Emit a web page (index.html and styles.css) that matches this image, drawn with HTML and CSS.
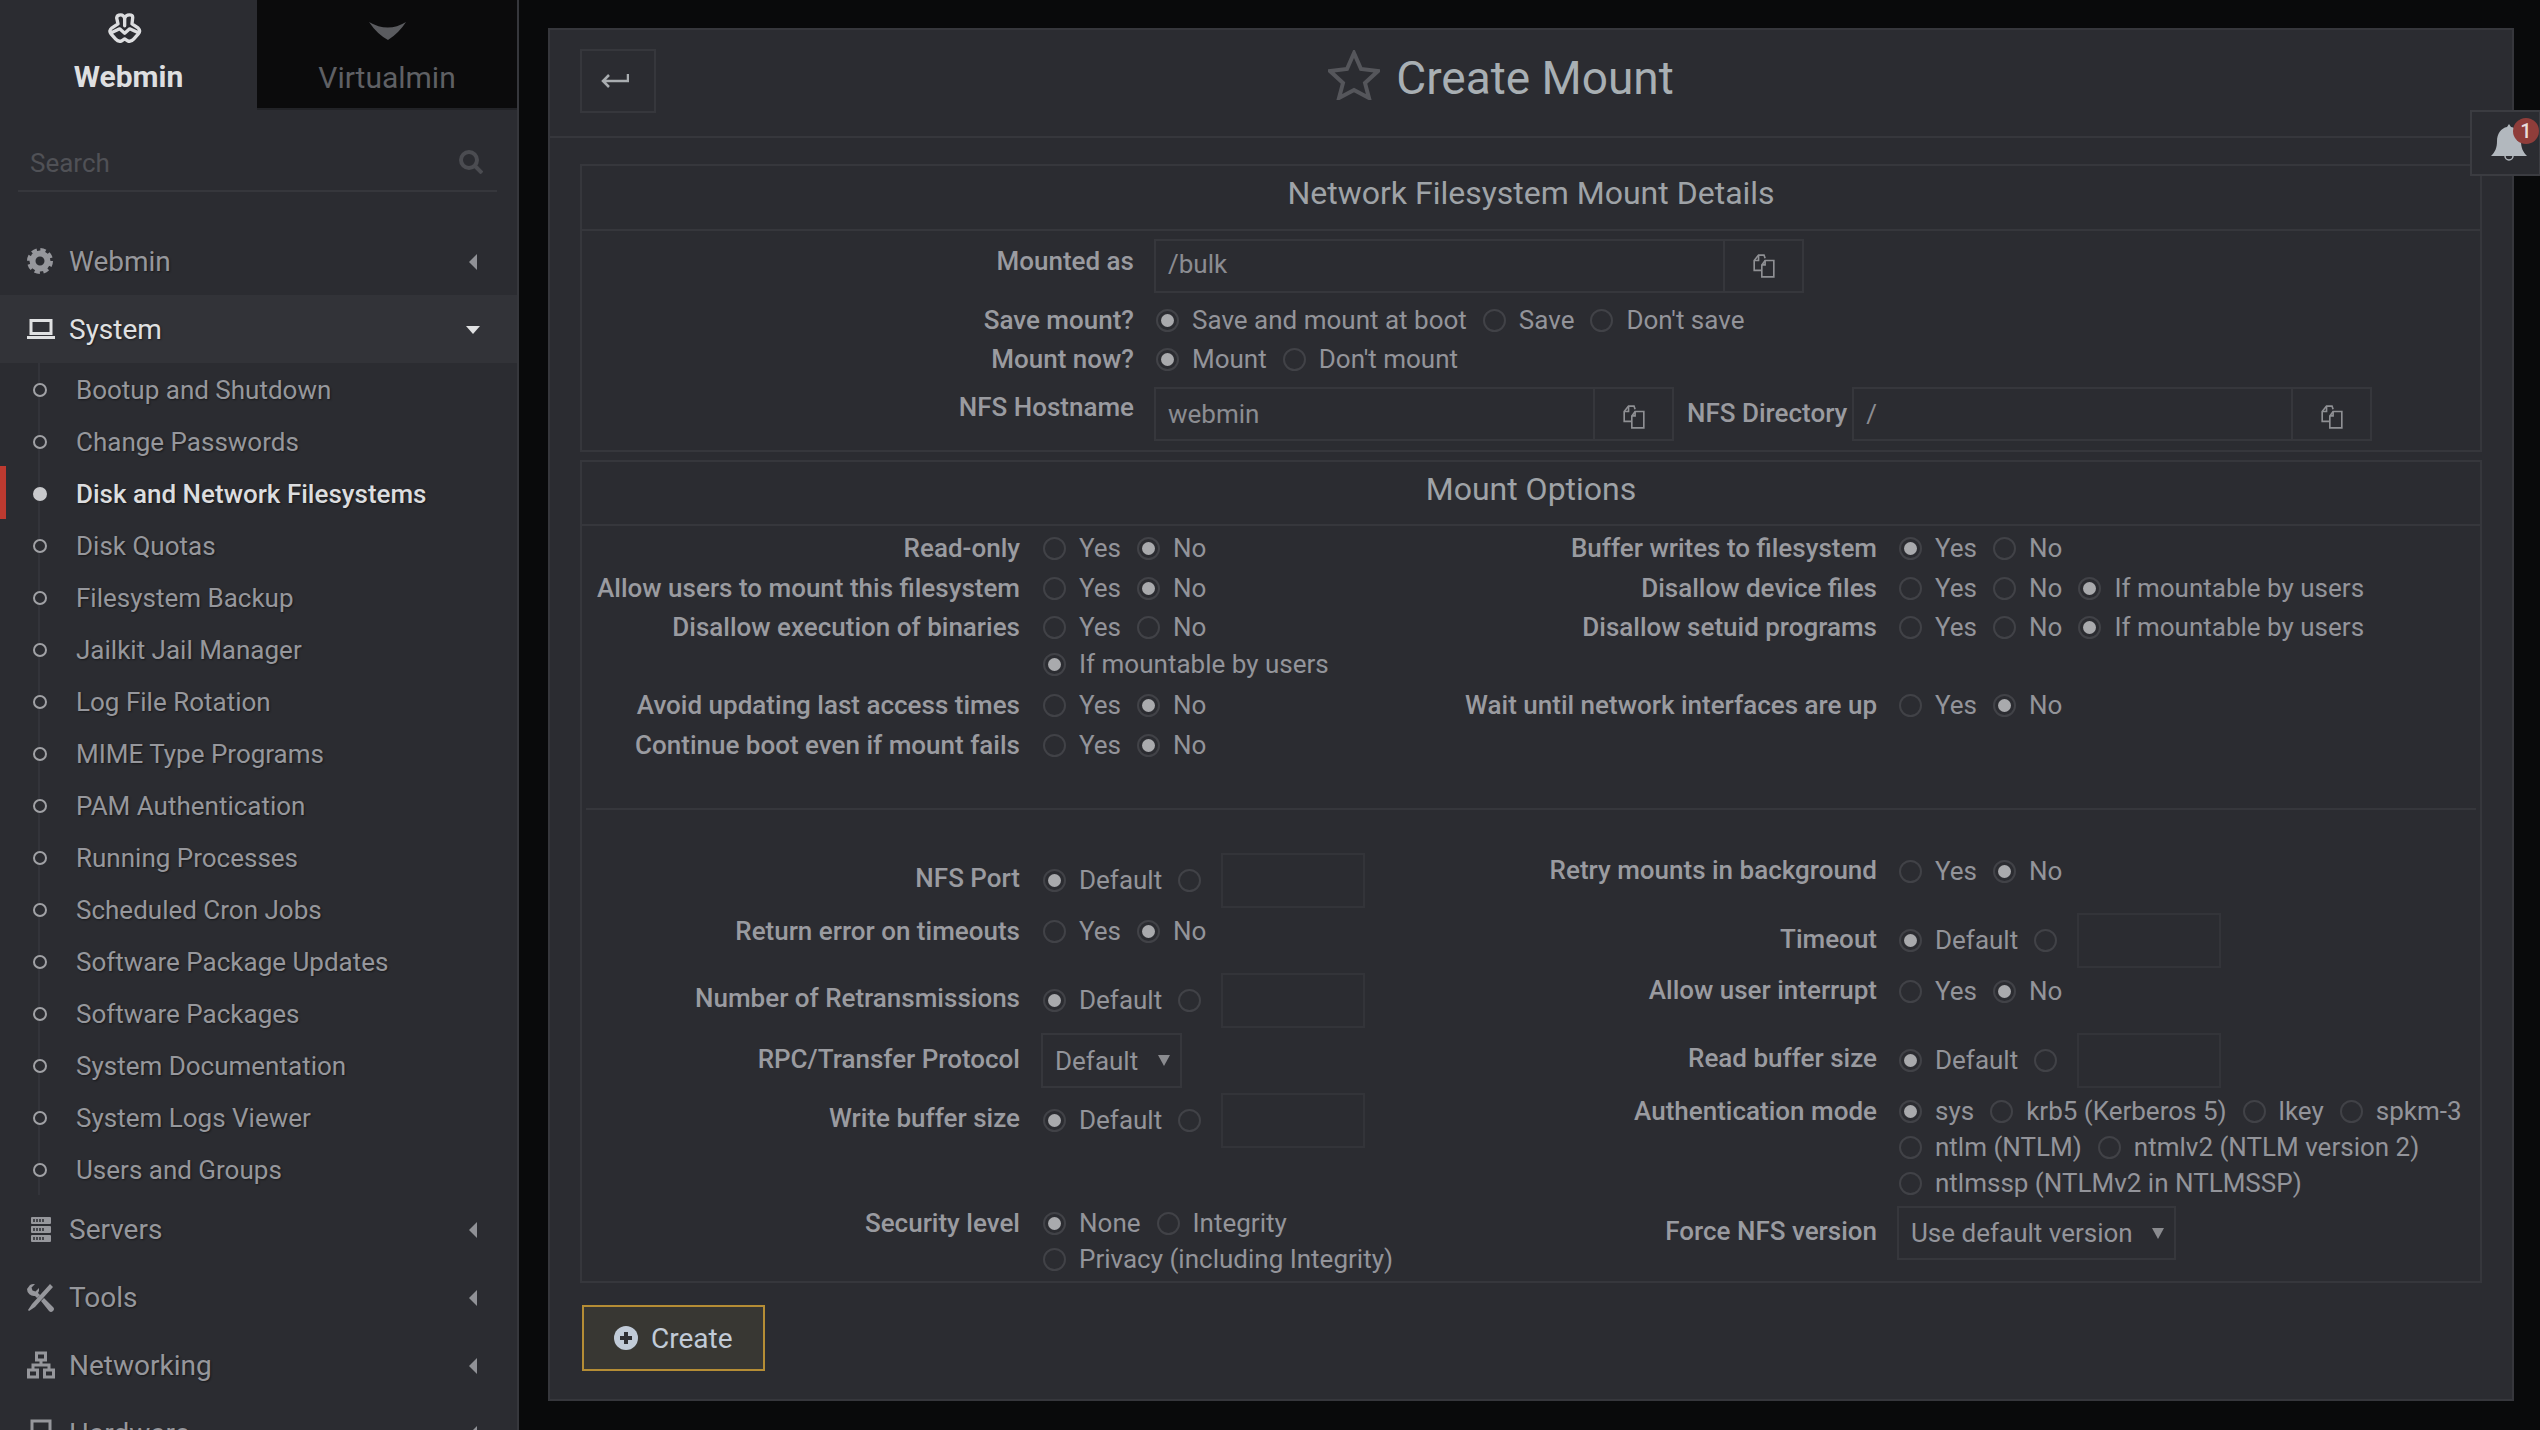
FILE: index.html
```html
<!DOCTYPE html>
<html lang="en">
<head>
<meta charset="utf-8">
<title>Create Mount</title>
<link rel="stylesheet" href="styles.css">
</head>
<body>
<aside class="sidebar">
  <div class="tabs">
    <div class="tab tab-on">
      <svg class="logo" viewBox="0 0 102 92"><path d="M30 32 L26 14 Q27 5 38 5 Q47 5 50 15 Q53 5 64 5 Q75 5 74 14 L72 32 L90 44 Q99 53 91 62 L77 78 Q69 87 59 83 L50 77 L41 83 Q31 87 23 78 L9 62 Q1 53 12 44 Z M50 15 V38 M13 57 L35 47 L50 60 L65 47 L88 57"/></svg>
      <span>Webmin</span>
    </div>
    <div class="tab tab-off">
      <svg class="chev" viewBox="0 0 37 18"><path d="M0 0 Q19 11 37 0 Q30 11 19 18 Q8 12 0 0Z"/></svg>
      <span>Virtualmin</span>
    </div>
  </div>
  <div class="search">
    <span>Search</span>
    <svg class="search-ico" viewBox="0 0 24 24"><circle cx="10" cy="10" r="8"/><path d="M16 16l7 7"/></svg>
  </div>
  <nav class="nav">
    <div class="sec">
      <svg class="ico" viewBox="0 0 28 28"><circle cx="13" cy="14" r="7.5" class="gear-ring"/><circle cx="13" cy="14" r="10.5" class="gear-teeth"/></svg>
      <span class="sec-name">Webmin</span><i class="ar-left"></i>
    </div>
    <div class="sec sec-open">
      <svg class="ico" viewBox="0 0 28 28"><path class="lap" d="M4 5.500h20v13H4z"/><path class="lap" d="M0 22.500h28"/></svg>
      <span class="sec-name">System</span><i class="ar-down"></i>
    </div>
    <ul class="sub">
      <li>Bootup and Shutdown</li>
      <li>Change Passwords</li>
      <li class="on">Disk and Network Filesystems</li>
      <li>Disk Quotas</li>
      <li>Filesystem Backup</li>
      <li>Jailkit Jail Manager</li>
      <li>Log File Rotation</li>
      <li>MIME Type Programs</li>
      <li>PAM Authentication</li>
      <li>Running Processes</li>
      <li>Scheduled Cron Jobs</li>
      <li>Software Package Updates</li>
      <li>Software Packages</li>
      <li>System Documentation</li>
      <li>System Logs Viewer</li>
      <li>Users and Groups</li>
    </ul>
    <div class="sec">
      <svg class="ico" viewBox="0 0 28 28"><path class="fill" d="M5 2h18a1 1 0 0 1 1 1v5a1 1 0 0 1-1 1H5a1 1 0 0 1-1-1V3a1 1 0 0 1 1-1zM5 11h18a1 1 0 0 1 1 1v5a1 1 0 0 1-1 1H5a1 1 0 0 1-1-1v-5a1 1 0 0 1 1-1zM5 20h18a1 1 0 0 1 1 1v5a1 1 0 0 1-1 1H5a1 1 0 0 1-1-1v-5a1 1 0 0 1 1-1z"/><path class="srv" d="M7 4v3M10 4v3M13 4v3M16 4v3M7 13v3M10 13v3M13 13v3M16 13v3M7 22v3M10 22v3M13 22v3M16 22v3"/></svg>
      <span class="sec-name">Servers</span><i class="ar-left"></i>
    </div>
    <div class="sec">
      <svg class="ico" viewBox="0 0 28 28"><path class="fill" d="M23 1l3 3L8 24l-6 4-1-1 4-6zM3 2a7 7 0 0 1 5-1L4.500 4.500l1 3 3 1L12 5a7 7 0 0 1-1 5l2 2-3 3-2-2a7 7 0 0 1-8-7zM17 15l9 9a2.500 2.500 0 0 1-4 4l-8-10z"/></svg>
      <span class="sec-name">Tools</span><i class="ar-left"></i>
    </div>
    <div class="sec">
      <svg class="ico" viewBox="0 0 28 28"><path class="lap" d="M9.500 2h9v7h-9zM1.500 19h9v7h-9zM17.500 19h9v7h-9zM14 9v5M6 19v-5h16v5"/></svg>
      <span class="sec-name">Networking</span><i class="ar-left"></i>
    </div>
    <div class="sec">
      <svg class="ico" viewBox="0 0 28 28"><path class="lap" d="M5 2h18v24H5z"/></svg>
      <span class="sec-name">Hardware</span><i class="ar-left"></i>
    </div>
  </nav>
</aside>

<main class="main">
  <section class="panel">
    <header class="head">
      <button class="back" type="button">
        <svg viewBox="0 0 28 16"><path d="M27 1v7H2M8 2L2 8l6 6"/></svg>
      </button>
      <h1 class="title">
        <svg class="star" viewBox="0 0 52 50"><path d="M26 3l7 16 17 2-13 12 4 15-15-8-15 8 4-15L2 21l17-2z"/></svg>
        <span>Create Mount</span>
      </h1>
    </header>

    <div class="bell">
      <svg viewBox="0 0 36 37"><path d="M18 0l2 3c6 1 10 7 10 14 0 7 2 11 6 15H0c4-4 6-8 6-15C6 10 10 4 16 3z"/><path class="clap" d="M14 32a4 4 0 0 0 8 0"/></svg>
      <b class="badge">1</b>
    </div>

    <form class="forms">
      <section class="box">
        <h2 class="box-title">Network Filesystem Mount Details</h2>
        <div class="box-one">
          <div class="row r-one h54">
            <div class="lab up10">Mounted as</div>
            <div class="val">
              <div class="group g-mount"><span class="field">/bulk</span><span class="copy"><svg class="copy-ico" viewBox="0 0 22 22"><path d="M9 15H2V6l4-5h5l1 3"/><path d="M2 6h4V1"/><path d="M9 21V10l3-4h8v15z"/><path d="M9 10h3V6"/></svg></span></div>
            </div>
          </div>
          <div class="row r-one h54">
            <div class="lab">Save mount?</div>
            <div class="val"><span class="opt"><i class="rd on"></i>Save and mount at boot</span><span class="opt"><i class="rd"></i>Save</span><span class="opt"><i class="rd"></i>Don't save</span></div>
          </div>
          <div class="row r-one h30 pull3">
            <div class="lab">Mount now?</div>
            <div class="val"><span class="opt"><i class="rd on"></i>Mount</span><span class="opt"><i class="rd"></i>Don't mount</span></div>
          </div>
          <div class="row r-one h54 mt13">
            <div class="lab up14">NFS Hostname</div>
            <div class="val">
              <div class="group g-host"><span class="field field-low">webmin</span><span class="copy copy-low"><svg class="copy-ico" viewBox="0 0 22 22"><path d="M9 15H2V6l4-5h5l1 3"/><path d="M2 6h4V1"/><path d="M9 21V10l3-4h8v15z"/><path d="M9 10h3V6"/></svg></span></div>
              <div class="lab lab-inline">NFS Directory</div>
              <div class="group g-dir"><span class="field field-low">/</span><span class="copy copy-low"><svg class="copy-ico" viewBox="0 0 22 22"><path d="M9 15H2V6l4-5h5l1 3"/><path d="M2 6h4V1"/><path d="M9 21V10l3-4h8v15z"/><path d="M9 10h3V6"/></svg></span></div>
            </div>
          </div>
        </div>
      </section>

      <section class="box box-two">
        <h2 class="box-title">Mount Options</h2>
        <div class="cols cols-top">
          <div class="col-l">
            <div class="row r-l h44"><div class="lab">Read-only</div><div class="val"><span class="opt"><i class="rd"></i>Yes</span><span class="opt"><i class="rd on"></i>No</span></div></div>
            <div class="row r-l h36"><div class="lab">Allow users to mount this filesystem</div><div class="val"><span class="opt"><i class="rd"></i>Yes</span><span class="opt"><i class="rd on"></i>No</span></div></div>
            <div class="row r-l h42"><div class="lab">Disallow execution of binaries</div><div class="val"><span class="opt"><i class="rd"></i>Yes</span><span class="opt"><i class="rd"></i>No</span></div></div>
            <div class="row r-l h32"><div class="lab"></div><div class="val"><span class="opt"><i class="rd on"></i>If mountable by users</span></div></div>
            <div class="row r-l h50"><div class="lab">Avoid updating last access times</div><div class="val"><span class="opt"><i class="rd"></i>Yes</span><span class="opt"><i class="rd on"></i>No</span></div></div>
            <div class="row r-l h30"><div class="lab">Continue boot even if mount fails</div><div class="val"><span class="opt"><i class="rd"></i>Yes</span><span class="opt"><i class="rd on"></i>No</span></div></div>
          </div>
          <div class="col-r">
            <div class="row r-r h44"><div class="lab">Buffer writes to filesystem</div><div class="val"><span class="opt"><i class="rd on"></i>Yes</span><span class="opt"><i class="rd"></i>No</span></div></div>
            <div class="row r-r h36"><div class="lab">Disallow device files</div><div class="val"><span class="opt"><i class="rd"></i>Yes</span><span class="opt"><i class="rd"></i>No</span><span class="opt"><i class="rd on"></i>If mountable by users</span></div></div>
            <div class="row r-r h42"><div class="lab">Disallow setuid programs</div><div class="val"><span class="opt"><i class="rd"></i>Yes</span><span class="opt"><i class="rd"></i>No</span><span class="opt"><i class="rd on"></i>If mountable by users</span></div></div>
            <div class="row r-r h50 mt32"><div class="lab">Wait until network interfaces are up</div><div class="val"><span class="opt"><i class="rd"></i>Yes</span><span class="opt"><i class="rd on"></i>No</span></div></div>
          </div>
        </div>
        <hr class="sep">
        <div class="cols cols-low">
          <div class="col-l col-low-l">
            <div class="row r-l h55"><div class="lab up5">NFS Port</div><div class="val"><span class="opt"><i class="rd on"></i>Default</span><span class="opt opt-empty"><i class="rd"></i></span><span class="num"></span></div></div>
            <div class="row r-l h46"><div class="lab">Return error on timeouts</div><div class="val"><span class="opt"><i class="rd"></i>Yes</span><span class="opt"><i class="rd on"></i>No</span></div></div>
            <div class="row r-l h55 mt19"><div class="lab up5">Number of Retransmissions</div><div class="val"><span class="opt"><i class="rd on"></i>Default</span><span class="opt opt-empty"><i class="rd"></i></span><span class="num"></span></div></div>
            <div class="row r-l h55 mt5"><div class="lab up4">RPC/Transfer Protocol</div><div class="val"><span class="sel sel-proto">Default<i class="sel-ar"></i></span></div></div>
            <div class="row r-l h55 mt5"><div class="lab up5">Write buffer size</div><div class="val"><span class="opt"><i class="rd on"></i>Default</span><span class="opt opt-empty"><i class="rd"></i></span><span class="num"></span></div></div>
            <div class="row r-l r-multi mt57"><div class="lab">Security level</div><div class="val val-lines"><div class="line"><span class="opt"><i class="rd on"></i>None</span><span class="opt"><i class="rd"></i>Integrity</span></div><div class="line"><span class="opt"><i class="rd"></i>Privacy (including Integrity)</span></div></div></div>
          </div>
          <div class="col-r col-low-r">
            <div class="row r-r h42"><div class="lab up2">Retry mounts in background</div><div class="val"><span class="opt"><i class="rd"></i>Yes</span><span class="opt"><i class="rd on"></i>No</span></div></div>
            <div class="row r-r h55 mt21"><div class="lab up4">Timeout</div><div class="val"><span class="opt"><i class="rd on"></i>Default</span><span class="opt opt-empty"><i class="rd"></i></span><span class="num"></span></div></div>
            <div class="row r-r h46"><div class="lab up2">Allow user interrupt</div><div class="val"><span class="opt"><i class="rd"></i>Yes</span><span class="opt"><i class="rd on"></i>No</span></div></div>
            <div class="row r-r h55 mt19"><div class="lab up5">Read buffer size</div><div class="val"><span class="opt"><i class="rd on"></i>Default</span><span class="opt opt-empty"><i class="rd"></i></span><span class="num"></span></div></div>
            <div class="row r-r r-multi mt5"><div class="lab">Authentication mode</div><div class="val val-lines"><div class="line"><span class="opt"><i class="rd on"></i>sys</span><span class="opt"><i class="rd"></i>krb5 (Kerberos 5)</span><span class="opt"><i class="rd"></i>lkey</span><span class="opt"><i class="rd"></i>spkm-3</span></div><div class="line"><span class="opt"><i class="rd"></i>ntlm (NTLM)</span><span class="opt"><i class="rd"></i>ntmlv2 (NTLM version 2)</span></div><div class="line"><span class="opt"><i class="rd"></i>ntlmssp (NTLMv2 in NTLMSSP)</span></div></div></div>
            <div class="row r-r h54 mt5"><div class="lab up5">Force NFS version</div><div class="val"><span class="sel sel-nfs">Use default version<i class="sel-ar"></i></span></div></div>
          </div>
        </div>
      </section>

      <button class="create" type="button">
        <svg class="plus" viewBox="0 0 24 24"><circle cx="12" cy="12" r="12"/><path d="M12 6v12M6 12h12"/></svg>
        <span>Create</span>
      </button>
    </form>
  </section>
</main>
</body>
</html>
```

FILE: styles.css
```css
* { box-sizing: border-box; }
html, body { margin: 0; height: 1430px; overflow: hidden; }
body {
  display: flex;
  background: #090a0b;
  font-family: Roboto, "Liberation Sans", sans-serif;
  font-size: 26px;
  color: #96979c;
}

/* sidebar */
.sidebar {
  width: 519px;
  height: 1430px;
  flex: none;
  overflow: hidden;
  background: #2b2c31;
  border-right: 2px solid #36373c;
}
.tabs { display: flex; height: 110px; }
.tab { display: flex; flex-direction: column; align-items: center; font-size: 30px; }
.tab-on { width: 257px; color: #dedfe0; font-weight: 700; padding-top: 13px; }
.tab-off { width: 260px; background: #0b0b0c; color: #5f6064; padding-top: 22px; border-bottom: 2px solid #222327; }
.tab span { line-height: 34px; }
.tab-on span { margin-top: 16px; }
.tab-off span { margin-top: 21px; }
.logo { width: 34px; height: 31px; margin-left: -8px; fill: none; stroke: #dcdddf; stroke-width: 10; stroke-linejoin: round; stroke-linecap: round; }
.chev { width: 37px; height: 18px; fill: #5a5b5f; }

.search {
  display: flex;
  align-items: center;
  justify-content: space-between;
  height: 82px;
  margin: 0 20px 0 18px;
  padding: 26px 14px 0 12px;
  border-bottom: 2px solid #36373c;
  color: #505156;
}
.search-ico { width: 24px; height: 24px; margin-top: -2px; fill: none; stroke: #4b4c51; stroke-width: 4; }

.nav { padding-top: 35px; text-shadow: 1px 1px 2px rgba(0,0,0,.45); }
.sec {
  position: relative;
  display: flex;
  align-items: center;
  height: 68px;
  padding: 0 40px 0 27px;
  font-size: 28px;
  color: #96979c;
}
.sec-open { background: #323338; color: #e0e1e2; }
.ico { width: 28px; height: 28px; flex: none; margin-right: 14px; overflow: visible; }
.sec-name { flex: 1; }
.gear-ring { fill: none; stroke: #96979c; stroke-width: 6; }
.gear-teeth { fill: none; stroke: #96979c; stroke-width: 5; stroke-dasharray: 5 3.25; }
.lap { fill: none; stroke: currentColor; stroke-width: 3; }
.fill { fill: #96979c; }
.srv { fill: none; stroke: #2b2c31; stroke-width: 1.500; }
.ar-left { width: 0; height: 0; margin-top: 2px; border-style: solid; border-width: 8px 8px 8px 0; border-color: transparent #909196 transparent transparent; }
.ar-down { width: 0; height: 0; margin: 2px -3px 0 0; border-style: solid; border-width: 8px 7px 0; border-color: #e0e1e2 transparent transparent; }

.sub { position: relative; margin: 0; padding: 0; list-style: none; }
.sub::before { content: ""; position: absolute; left: 38px; top: 0; bottom: 0; width: 2px; background: #33343a; }
.sub li {
  position: relative;
  display: flex;
  align-items: center;
  height: 52px;
  padding: 2px 0 0 33px;
  gap: 29px;
}
.sub li::before {
  content: "";
  width: 10px;
  height: 10px;
  flex: none;
  border-radius: 50%;
  border: 2px solid #a0a1a5;
  background: #2b2c31;
  z-index: 1;
}
.sub li.on { color: #dcdddf; font-weight: 500; }
.sub li.on::before { background: #c8c9cc; border-color: #c8c9cc; }
.sub li.on::after { content: ""; position: absolute; left: 0; top: -1px; bottom: 0; width: 6px; background: #bd3a30; }

/* main panel */
.main { flex: 1; padding: 28px 26px 30px 29px; }
.panel {
  position: relative;
  height: 1373px;
  background: #2b2c31;
  border: 2px solid #36373c;
}
.head {
  position: relative;
  display: flex;
  align-items: center;
  justify-content: center;
  height: 108px;
  border-bottom: 2px solid #36373c;
}
.back {
  position: absolute;
  left: 30px;
  top: 19px;
  width: 76px;
  height: 64px;
  padding: 0;
  background: transparent;
  border: 2px solid #36373c;
  display: flex;
  align-items: center;
  justify-content: center;
}
.back svg { width: 28px; height: 16px; margin: 0 6px 0 0; fill: none; stroke: #a9adb0; stroke-width: 2.500; }
.title {
  display: flex;
  align-items: center;
  margin: -10px 0 0 8px;
  font-size: 46px;
  font-weight: 400;
  color: #a8afb3;
}
.star { width: 52px; height: 50px; margin: -6px 16px 0 -68px; fill: none; stroke: #55565b; stroke-width: 4; stroke-linejoin: miter; }

.bell {
  position: absolute;
  right: -29px;
  top: 80px;
  width: 71px;
  height: 66px;
  background: #2b2c31;
  border: 2px solid #3b3c41;
}
.bell svg { position: absolute; left: 19px; top: 12px; width: 36px; height: 37px; fill: #b2b8be; }
.bell .clap { fill: none; stroke: #b2b8be; stroke-width: 1.500; }
.badge {
  position: absolute;
  left: 41px;
  top: 6px;
  width: 26px;
  height: 26px;
  border-radius: 50%;
  background: #8f3d3a;
  color: #e8dcdc;
  font-size: 20px;
  font-weight: 500;
  line-height: 26px;
  text-align: center;
}

.forms { padding: 26px 30px 0; }
.box { border: 2px solid #36373c; }
.box-two { margin-top: 8px; height: 823px; }
.box-title {
  margin: 0;
  height: 65px;
  padding-bottom: 9px;
  display: flex;
  align-items: center;
  justify-content: center;
  border-bottom: 2px solid #36373c;
  font-size: 32px;
  font-weight: 400;
  color: #9fa3a7;
}
.box-two .box-title { height: 64px; }
.box-one { padding: 8px 0 9px; }

.row { display: grid; align-items: center; }
.r-one { grid-template-columns: 552px 1fr; column-gap: 20px; }
.r-l { grid-template-columns: 438px 1fr; column-gap: 21px; }
.r-r { grid-template-columns: 477px 1fr; column-gap: 20px; }
.r-multi { align-items: start; }
.lab { text-align: right; font-weight: 500; color: #9a9ba0; white-space: nowrap; }
.r-multi .lab { line-height: 36px; }
.val { display: flex; align-items: center; }
.val-lines { display: block; }
.line { display: flex; align-items: center; height: 36px; }
.opt { display: inline-flex; align-items: center; gap: 13px; margin-right: 16px; white-space: nowrap; color: #93949a; }
.val > .opt:first-child, .line > .opt:first-child { margin-left: 2px; }
.h55 .opt { margin-bottom: 1px; }
.opt-empty { margin-right: 20px; gap: 0; }
.rd {
  display: flex;
  align-items: center;
  justify-content: center;
  width: 23px;
  height: 23px;
  flex: none;
  border-radius: 50%;
  border: 2px solid #414247;
}
.rd.on::before { content: ""; width: 13px; height: 13px; border-radius: 50%; background: #a9aaad; }

.group { display: flex; height: 54px; border: 2px solid #36373c; color: #8b8c91; }
.g-mount { width: 650px; }
.g-host { width: 520px; }
.g-dir { width: 520px; }
.field { flex: 1; padding-left: 12px; line-height: 47px; }
.field-low { line-height: 51px; }
.copy { width: 79px; flex: none; display: flex; align-items: center; justify-content: center; border-left: 2px solid #36373c; }
.copy-low { padding-top: 6px; }
.copy-ico { width: 24px; height: 24px; fill: none; stroke: #8f9094; stroke-width: 1.500; }
.lab-inline { margin: 0 5px 2px 13px; }

.num { width: 144px; height: 55px; border: 2px solid #333439; }
.sel {
  display: flex;
  align-items: center;
  height: 100%;
  padding-left: 12px;
  border: 2px solid #36373c;
  color: #93949a;
}
.sel-proto { width: 141px; height: 55px; }
.sel-nfs { width: 279px; height: 54px; }
.sel-ar { margin-left: auto; margin-right: 10px; width: 0; height: 0; border-style: solid; border-width: 11px 6px 0; border-color: #8a8b8f transparent transparent; }

.cols { display: grid; grid-template-columns: 818px 1fr; }
.cols-top { height: 282px; }
.sep { height: 2px; margin: 0 4px; border: 0; background: #36373c; }
.col-low-l { padding-top: 43px; }
.col-low-r { padding-top: 40px; }

.h30 { height: 30px; }
.h32 { height: 32px; }
.h36 { height: 36px; }
.h42 { height: 42px; }
.h44 { height: 44px; }
.h46 { height: 46px; }
.h50 { height: 50px; }
.h54 { height: 54px; }
.h55 { height: 55px; }
.pull3 { margin-top: -3px; }
.mt5 { margin-top: 5px; }
.mt13 { margin-top: 13px; }
.mt19 { margin-top: 19px; }
.mt21 { margin-top: 21px; }
.mt32 { margin-top: 32px; }
.mt57 { margin-top: 57px; }
.up2 { margin-bottom: 2px; }
.up4 { margin-bottom: 4px; }
.up5 { margin-bottom: 5px; }
.up10 { margin-bottom: 10px; }
.up14 { margin-bottom: 14px; }

.create {
  display: flex;
  align-items: center;
  gap: 13px;
  width: 183px;
  height: 66px;
  margin: 22px 0 0 2px;
  padding: 0 0 0 30px;
  background: #383733;
  border: 2px solid #b58d35;
  color: #c1cbd8;
  font-family: inherit;
  font-size: 28px;
}
.plus { width: 24px; height: 24px; flex: none; fill: #c1cbd8; stroke: #2f3034; stroke-width: 4; }
.plus circle { stroke: none; }
```
